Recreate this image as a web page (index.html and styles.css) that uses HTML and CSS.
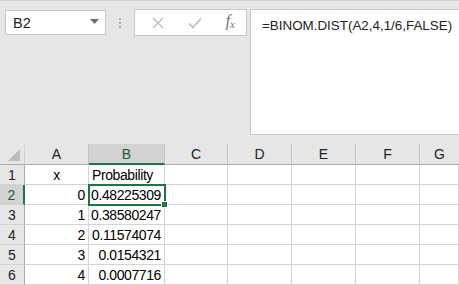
FILE: index.html
```html
<!DOCTYPE html>
<html lang="en">
<head>
    <meta charset="utf-8">
    <title>BINOM.DIST</title>
    <link rel="stylesheet" href="styles.css">
</head>
<body>
    <div class="formulaBar">
        <div class="nameBox">
            <span>B2</span>
            <svg class="caret" width="9" height="5" viewBox="0 0 9 5"><path d="M0 0h9L4.5 5z" fill="#6d6d6d"/></svg>
        </div>
        <div class="grip"><i></i><i></i><i></i></div>
        <div class="buttons">
            <svg width="12" height="12" viewBox="0 0 12 12"><path d="M1 1l10 10M11 1L1 11" stroke="#bdbdbd" stroke-width="1.4"/></svg>
            <svg width="14" height="12" viewBox="0 0 14 12"><path d="M1 6.5l4 4L13 1.5" stroke="#bdbdbd" stroke-width="1.6" fill="none"/></svg>
            <span class="fx">f<sub>x</sub></span>
        </div>
        <div class="formula">=BINOM.DIST(A2,4,1/6,FALSE)</div>
    </div>

    <div class="sheet">
        <div class="corner"><svg width="12" height="12" viewBox="0 0 12 12"><path d="M12 0v12H0z" fill="#bcbcbc"/></svg></div>
        <div class="colHead">A</div>
        <div class="colHead active">B</div>
        <div class="colHead">C</div>
        <div class="colHead">D</div>
        <div class="colHead">E</div>
        <div class="colHead">F</div>
        <div class="colHead last">G</div>

        <div class="rowHead">1</div>
        <div class="cell center">x</div>
        <div class="cell">Probability</div>
        <div class="cell"></div><div class="cell"></div><div class="cell"></div><div class="cell"></div><div class="cell"></div>

        <div class="rowHead active">2</div>
        <div class="cell num">0</div>
        <div class="cell num selected">0.48225309<span class="handle"></span></div>
        <div class="cell"></div><div class="cell"></div><div class="cell"></div><div class="cell"></div><div class="cell"></div>

        <div class="rowHead">3</div>
        <div class="cell num">1</div>
        <div class="cell num">0.38580247</div>
        <div class="cell"></div><div class="cell"></div><div class="cell"></div><div class="cell"></div><div class="cell"></div>

        <div class="rowHead">4</div>
        <div class="cell num">2</div>
        <div class="cell num">0.11574074</div>
        <div class="cell"></div><div class="cell"></div><div class="cell"></div><div class="cell"></div><div class="cell"></div>

        <div class="rowHead">5</div>
        <div class="cell num">3</div>
        <div class="cell num">0.0154321</div>
        <div class="cell"></div><div class="cell"></div><div class="cell"></div><div class="cell"></div><div class="cell"></div>

        <div class="rowHead">6</div>
        <div class="cell num">4</div>
        <div class="cell num">0.0007716</div>
        <div class="cell"></div><div class="cell"></div><div class="cell"></div><div class="cell"></div><div class="cell"></div>
    </div>
</body>
</html>
```

FILE: styles.css
```css
html, body {
    margin: 0;
    padding: 0;
    overflow: hidden;
}
body {
    width: 459px;
    height: 285px;
    background-color: #e6e6e6;
    font-family: "Liberation Sans", Arial, sans-serif;
    color: #000;
    border-top: 1px solid #d4d4d4;
    box-sizing: border-box;
}
.formulaBar {
    display: flex;
    align-items: flex-start;
    padding: 9px 0 0 5px;
    height: 135px;
    box-sizing: border-box;
}
.nameBox {
    width: 101px;
    height: 25px;
    box-sizing: border-box;
    background: #fff;
    border: 1px solid #c6c6c6;
    display: flex;
    align-items: center;
    justify-content: space-between;
    padding: 0 6px 0 7px;
    font-size: 14.5px;
    color: #222;
}
.caret {
    margin-top: -2px;
}
.grip {
    width: 28px;
    height: 25px;
    display: flex;
    flex-direction: column;
    align-items: center;
    justify-content: center;
    gap: 2px;
}
.grip i {
    width: 2px;
    height: 2px;
    background: #b0b0b0;
}
.buttons {
    width: 113px;
    height: 27px;
    margin-top: -1px;
    box-sizing: border-box;
    background: #fff;
    border: 1px solid #c6c6c6;
    display: flex;
    align-items: center;
    justify-content: space-between;
    padding: 0 11px 0 17px;
}
.fx {
    font-family: "Liberation Serif", serif;
    font-style: italic;
    font-size: 16px;
    color: #6e6e6e;
    margin-top: -3px;
}
.fx sub {
    font-size: 11px;
    vertical-align: -2px;
}
.formula {
    flex: 1;
    height: 126px;
    margin-left: 3px;
    margin-top: -1px;
    box-sizing: border-box;
    background: #fff;
    border: 1px solid #c6c6c6;
    border-right: none;
    padding: 8px 0 0 11px;
    font-size: 13.4px;
    color: #222;
}
.sheet {
    display: grid;
    grid-template-columns: 25px 64px 76px 63px 64px 64px 64px 39px;
    grid-auto-rows: 20px;
    margin-top: 9px;
    background: #fff;
    font-size: 14px;
}
.corner {
    background: #e6e6e6;
    border-right: 1px solid #d0d0d0;
    border-bottom: 1px solid #ababab;
    display: flex;
    align-items: flex-end;
    justify-content: flex-end;
    padding: 0 4px 3px 0;
    box-sizing: border-box;
}
.colHead {
    background: #e6e6e6;
    border-right: 1px solid #c4c4c4;
    border-bottom: 1px solid #ababab;
    display: flex;
    align-items: center;
    justify-content: center;
    color: #222;
    font-size: 14px;
    height: 21px;
    margin-top: -1px;
    box-sizing: border-box;
}
.colHead.active {
    background: #d2d2d2;
    border-bottom: 2px solid #217346;
    color: #1e5a35;
}
.colHead.last {
    border-right: none;
}
.rowHead {
    background: #e6e6e6;
    border-right: 1px solid #ababab;
    border-bottom: 1px solid #d4d4d4;
    display: flex;
    align-items: center;
    justify-content: center;
    color: #222;
    box-sizing: border-box;
}
.rowHead.active {
    background: #d2d2d2;
    border-right: 2px solid #217346;
    color: #1e5a35;
}
.cell {
    border-right: 1px solid #d4d4d4;
    border-bottom: 1px solid #d4d4d4;
    display: flex;
    align-items: center;
    padding: 1px 3px 0 3px;
    box-sizing: border-box;
    white-space: nowrap;
    letter-spacing: -0.4px;
}
.cell.center {
    justify-content: center;
}
.cell.num {
    justify-content: flex-end;
}
.cell.selected {
    position: relative;
    outline: 2px solid #217346;
    outline-offset: -1px;
    z-index: 1;
}
.handle {
    position: absolute;
    right: -4px;
    bottom: -4px;
    width: 5px;
    height: 5px;
    background: #217346;
    border: 1px solid #fff;
}
```
